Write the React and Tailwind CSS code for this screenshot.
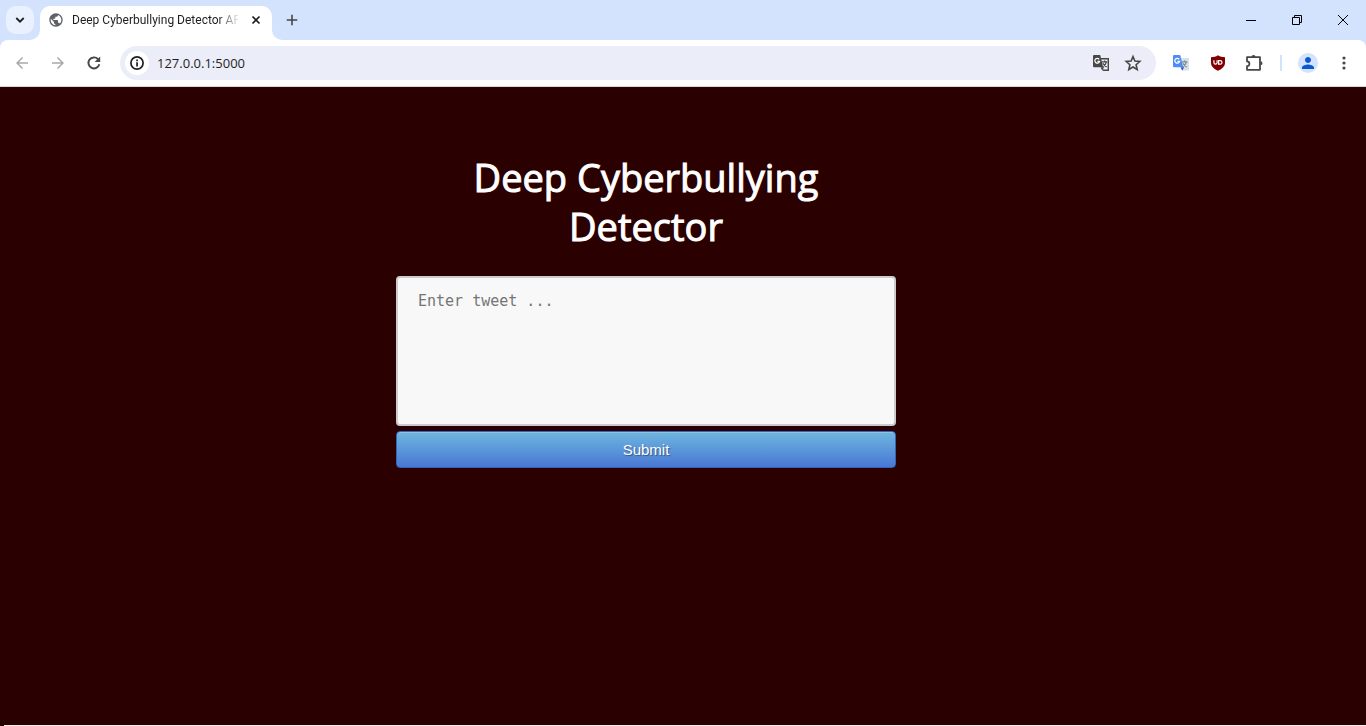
import React from "react";
import {
  MdArrowBack,
  MdArrowForward,
  MdPerson,
  MdPublic,
} from "react-icons/md";

function ReloadIcon() {
  return (
    <svg viewBox="0 0 18 18" className="size-[18px]" aria-hidden="true">
      <path d="M14.300 10.200A5.500 5.500 0 1 1 13 5.200l1 1" fill="none" stroke="#474747" strokeWidth="1.9" />
      <path d="M15.200 2.500v5.600H9.600z" fill="#474747" />
    </svg>
  );
}

function InfoIcon() {
  return (
    <svg viewBox="0 0 16 16" className="size-4" aria-hidden="true">
      <circle cx="8" cy="8" r="6.1" fill="none" stroke="#1f1f1f" strokeWidth="1.7" />
      <path d="M7.200 7.200h1.700v4.300H7.200zM7.200 4.500h1.700v1.700H7.200z" fill="#1f1f1f" />
    </svg>
  );
}

function StarIcon() {
  return (
    <svg viewBox="0 0 18 18" className="size-[18px]" aria-hidden="true">
      <path
        d="m9 2.600 1.900 4.500 4.900.4-3.700 3.200 1.100 4.800L9 13l-4.200 2.500 1.100-4.800-3.700-3.200 4.900-.4z"
        fill="none"
        stroke="#474747"
        strokeWidth="1.6"
      />
    </svg>
  );
}

function TranslateIcon({ colored }) {
  const front = colored ? "#4f8df5" : "#474747";
  return (
    <svg viewBox="0 0 18 18" className="size-[18px]" aria-hidden="true">
      <path
        d={colored ? "M7 4h10v12.5H11z" : "M8 4.7h8.3v11.6h-5.4"}
        fill={colored ? "#dcdfe2" : "none"}
        stroke={colored ? "none" : front}
        strokeWidth="1.4"
      />
      <path d="M9.8 7.8h5.6M12.6 6.4v1.4M14.4 7.8c-.4 2-1.700 3.500-3.300 4.600M10.900 9.300c.8 1.500 2.200 2.800 3.800 3.600" stroke={colored ? "#6f8f9a" : front} strokeWidth="1.2" fill="none" />
      <path d="M2 1h6.2l3 12.3H2a1 1 0 0 1-1-1V2a1 1 0 0 1 1-1z" fill={front} />
      <path d="m8.600 13.300 3.600 0-2 3.400z" fill={colored ? "#3558c8" : front} />
      <path d="M7.200 5.300A2.400 2.400 0 1 0 7.600 7.300H5.400" stroke="#fff" strokeWidth="1.2" fill="none" />
    </svg>
  );
}

function ShieldIcon() {
  return (
    <svg viewBox="0 0 16 16" className="size-4" aria-hidden="true">
      <path d="M8 .3C5.900 1.800 3.700 2.200 1 2.300v5.200c0 4 2.600 6.200 7 8.200 4.400-2 7-4.200 7-8.200V2.300C12.300 2.200 10.100 1.800 8 .3z" fill="#800000" />
      <path d="M3.900 5.200v2.300a1.600 1.600 0 0 0 3.200 0V5.200" stroke="#fff" strokeWidth="1.2" fill="none" />
      <path d="M8.600 5.600h1.600a1.800 1.800 0 0 1 0 3.600H8.600z" stroke="#fff" strokeWidth="1.2" fill="none" />
    </svg>
  );
}

function PuzzleIcon() {
  return (
    <svg viewBox="0 0 20 20" className="size-5" aria-hidden="true">
      <path
        d="M3 4.200h13v12.600H3v-3.700a2.400 2.400 0 0 0 0-4.800z"
        fill="none"
        stroke="#474747"
        strokeWidth="1.8"
        strokeLinejoin="round"
      />
      <path d="M7.500 4a2 2 0 0 1 4 0zM16.500 8.300a2 2 0 0 1 0 4z" fill="#474747" />
    </svg>
  );
}

function IconButton({ label, children, className = "" }) {
  return (
    <button type="button" aria-label={label} className={`flex shrink-0 items-center justify-center text-[#474747] ${className}`}>
      {children}
    </button>
  );
}

function TabStrip() {
  return (
    <div className="flex h-10 items-start bg-[#d3e2fd] pl-1.5">
      <IconButton label="Search tabs" className="mt-1.5 size-7 rounded-[10px] bg-[#e9f1fe]">
        <svg viewBox="0 0 10 10" className="size-2.5" fill="none" stroke="#1f1f1f" strokeWidth="1.8" aria-hidden="true">
          <path d="m1.300 3 3.700 3.700L8.700 3" />
        </svg>
      </IconButton>
      <div className="relative mt-1.5 ml-1.5 flex h-[34px] w-[232px] items-center rounded-t-[10px] bg-white pb-1.5 pl-2">
        <svg viewBox="0 0 10 10" className="absolute bottom-0 -left-2.5 size-2.5" aria-hidden="true">
          <path d="M10 0v10H0A10 10 0 0 0 10 0z" fill="#fff" />
        </svg>
        <MdPublic size={16} color="#5f6368" className="shrink-0" />
        <span className="ml-2 w-[166px] overflow-hidden font-[Roboto,sans-serif] text-[12px] leading-4 whitespace-nowrap text-[#1f1f1f] [mask-image:linear-gradient(to_right,black_146px,transparent_168px)]">
          Deep Cyberbullying Detector AP
        </span>
        <IconButton label="Close tab" className="ml-2.5 size-4">
          <svg viewBox="0 0 16 16" className="size-4" stroke="#1f1f1f" strokeWidth="1.7" aria-hidden="true">
            <path d="m4.500 4.500 7 7M11.500 4.500l-7 7" />
          </svg>
        </IconButton>
        <svg viewBox="0 0 10 10" className="absolute -right-2.5 bottom-0 size-2.5" aria-hidden="true">
          <path d="M0 0v10h10A10 10 0 0 1 0 0z" fill="#fff" />
        </svg>
      </div>
      <IconButton label="New tab" className="mt-1.5 ml-1.5 size-7">
        <svg viewBox="0 0 12 12" className="size-3" stroke="#474747" strokeWidth="1.6" aria-hidden="true">
          <path d="M6 .7v10.600M.7 6h10.600" />
        </svg>
      </IconButton>
      <div className="ml-auto flex h-10">
        <IconButton label="Minimize" className="w-[46px]">
          <svg viewBox="0 0 10 10" className="size-2.5" fill="#000" aria-hidden="true"><path d="M0 5h10v1H0z" /></svg>
        </IconButton>
        <IconButton label="Restore" className="w-[46px]">
          <svg viewBox="0 0 10 10" className="size-2.5" fill="none" stroke="#000" aria-hidden="true">
            <path d="M.5 2.500h7v7h-7zM2.500 2.500v-2h7v7h-2" />
          </svg>
        </IconButton>
        <IconButton label="Close" className="w-[46px]">
          <svg viewBox="0 0 10 10" className="size-2.5" stroke="#000" aria-hidden="true"><path d="m0 0 10 10M10 0 0 10" /></svg>
        </IconButton>
      </div>
    </div>
  );
}

function Toolbar() {
  return (
    <div className="bg-[#d3e2fd]">
      <div className="flex h-[47px] items-center rounded-t-lg border-b border-[#d9d9d9] bg-white pr-2.5 pl-2">
        <IconButton label="Back" className="size-7"><MdArrowBack size={18} color="#a9a9a9" /></IconButton>
        <IconButton label="Forward" className="ml-2 size-7"><MdArrowForward size={18} color="#a9a9a9" /></IconButton>
        <IconButton label="Reload" className="ml-2 size-7"><ReloadIcon /></IconButton>
        <div className="ml-3 flex h-[34px] min-w-0 flex-1 items-center rounded-full bg-[#ebeef8] pr-3.5 pl-[5px]">
          <IconButton label="View site information" className="size-6 rounded-full bg-white">
            <InfoIcon />
          </IconButton>
          <input
            aria-label="Address"
            defaultValue="127.0.0.1:5000"
            className="ml-2 min-w-0 flex-1 bg-transparent font-['Open_Sans',sans-serif] text-[13px] leading-5 text-[#1f1f1f] outline-none"
          />
          <IconButton label="Translate this page"><TranslateIcon /></IconButton>
          <IconButton label="Bookmark this tab" className="ml-3.5"><StarIcon /></IconButton>
        </div>
        <div className="ml-4 flex items-center">
          <IconButton label="Google Translate"><TranslateIcon colored /></IconButton>
          <IconButton label="uBlock Origin" className="ml-5"><ShieldIcon /></IconButton>
          <IconButton label="Extensions" className="ml-[18px]"><PuzzleIcon /></IconButton>
          <span className="ml-4 h-4 w-0.5 bg-[#d3e2fd]" />
          <IconButton label="Profile" className="ml-4 size-5 rounded-full bg-[#d3e2fd]">
            <MdPerson size={18} color="#0b57d0" />
          </IconButton>
          <IconButton label="Menu" className="ml-3.5 size-6">
            <svg viewBox="0 0 4 16" className="h-4 w-1" fill="#474747" aria-hidden="true">
              <circle cx="2" cy="3" r="1.6" /><circle cx="2" cy="8" r="1.6" /><circle cx="2" cy="13" r="1.6" />
            </svg>
          </IconButton>
        </div>
      </div>
    </div>
  );
}

export default function App() {
  return (
    <div className="flex min-h-screen flex-col bg-[#2b0000]">
      <header>
        <TabStrip />
        <Toolbar />
      </header>
      <main className="flex flex-1 flex-col items-center pt-[66px] pr-[74px]">
        <div className="w-full max-w-[500px]">
          <h1 className="text-center font-['Open_Sans',sans-serif] text-[38px] leading-[49px] font-normal text-white [-webkit-text-stroke:1px_white]">
            Deep Cyberbullying Detector
          </h1>
          <form className="mt-[25px]" onSubmit={(event) => event.preventDefault()}>
            <textarea
              aria-label="Tweet"
              placeholder="Enter tweet ..."
              className="block h-[150px] w-full resize-none rounded-[4px] border-2 border-[#cccccc] bg-[#f8f8f8] px-5 py-3 font-['DejaVu_Sans_Mono',monospace] text-[15px] leading-[22px] text-[#333333] outline-none placeholder:text-[#757575]"
            />
            <button
              type="submit"
              className="mt-[5px] block h-[37px] w-full rounded-[4px] border border-[#3762bc] bg-linear-to-b from-[#6eb6de] to-[#4a77d4] font-['Liberation_Sans',sans-serif] text-[15px] leading-5 text-white [box-shadow:inset_0_1px_0_rgba(255,255,255,0.2)] [text-shadow:1px_1px_1px_rgba(0,0,0,0.4)]"
            >
              Submit
            </button>
          </form>
        </div>
      </main>
      <footer className="ml-1 h-px bg-[#f5eeee]" />
    </div>
  );
}
